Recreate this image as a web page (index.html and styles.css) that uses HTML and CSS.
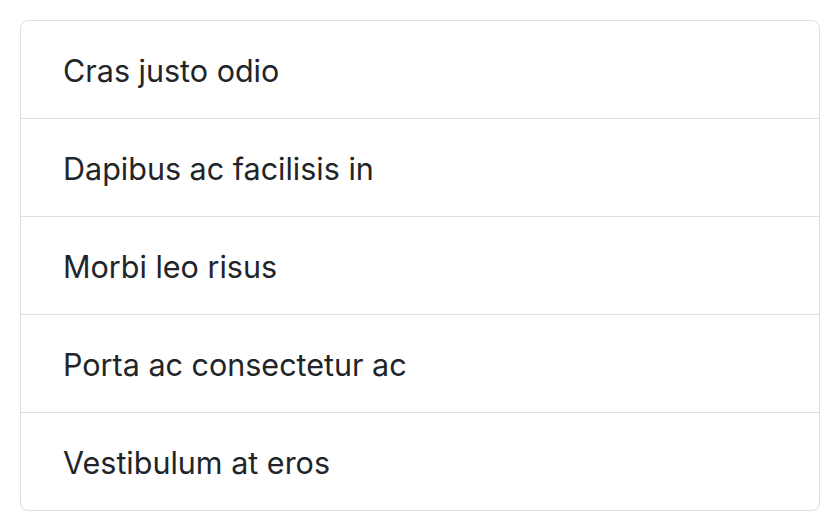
FILE: index.html
```html
<!DOCTYPE html>
<html>
<head>
<meta charset="utf-8">
<link rel="stylesheet" href="styles.css">
</head>
<body>
<ul class="list-group">
  <li class="list-item">Cras justo odio</li>
  <li class="list-item">Dapibus ac facilisis in</li>
  <li class="list-item">Morbi leo risus</li>
  <li class="list-item">Porta ac consectetur ac</li>
  <li class="list-item">Vestibulum at eros</li>
</ul>
</body>
</html>
```
FILE: styles.css
```css
html, body {
  margin: 0;
  padding: 0;
  background: #fff;
}
body {
  padding: 20px;
  font-family: Inter, "Liberation Sans", Arial, sans-serif;
  color: #212529;
}
.list-group {
  list-style: none;
  margin: 0;
  padding: 0;
  width: 800px;
  border: 1px solid #dfdfdf;
  border-radius: 8px;
  box-sizing: border-box;
}
.list-item {
  padding: 27px 42px 25px;
  font-size: 30.5px;
  line-height: 45px;
  border-top: 1px solid #dfdfdf;
}
.list-item:first-child {
  border-top: none;
}
```
